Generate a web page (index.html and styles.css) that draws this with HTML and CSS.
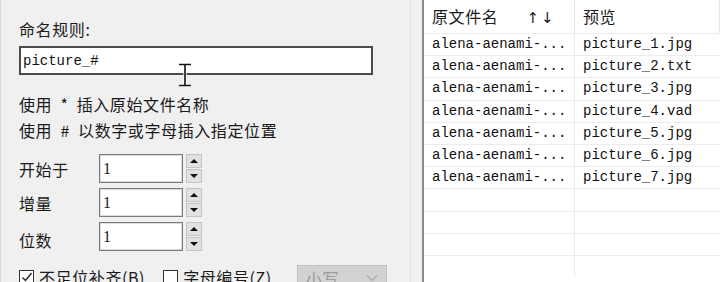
FILE: index.html
```html
<!DOCTYPE html>
<html lang="zh-CN">
<head>
    <meta charset="UTF-8">
    <title>批量重命名</title>
    <link rel="stylesheet" href="styles.css">
</head>
<body>
    <div class="window">
        <div class="settings">
            <div class="title">命名规则:</div>
            <div class="pattern">
                <span class="pattern-text">picture_#</span>
                <svg class="ibeam" width="14" height="24" viewBox="0 0 14 24">
                    <path d="M1 1.5h12M1 22.5h12M7 1.5v21" stroke="#fff" stroke-width="3.2" fill="none"/>
                    <path d="M1 1.5h12M1 22.5h12M7 1.5v21" stroke="#111" stroke-width="1.6" fill="none"/>
                </svg>
            </div>
            <div class="hints">
                <div>使用 <span class="sym">*</span> 插入原始文件名称</div>
                <div>使用 <span class="sym">#</span> 以数字或字母插入指定位置</div>
            </div>

            <div class="spins">
                <div class="spin-row">
                    <span class="spin-label">开始于</span>
                    <span class="spin-box">1</span>
                    <span class="spin-btns">
                        <span class="spin-btn"><i class="up"></i></span>
                        <span class="spin-btn"><i class="down"></i></span>
                    </span>
                </div>
                <div class="spin-row">
                    <span class="spin-label">增量</span>
                    <span class="spin-box">1</span>
                    <span class="spin-btns">
                        <span class="spin-btn"><i class="up"></i></span>
                        <span class="spin-btn"><i class="down"></i></span>
                    </span>
                </div>
                <div class="spin-row low">
                    <span class="spin-label">位数</span>
                    <span class="spin-box">1</span>
                    <span class="spin-btns">
                        <span class="spin-btn"><i class="up"></i></span>
                        <span class="spin-btn"><i class="down"></i></span>
                    </span>
                </div>
            </div>

            <div class="options">
                <label class="check">
                    <span class="box checked">
                        <svg width="12" height="12" viewBox="0 0 12 12"><path d="M1.5 6.5l3 3 6-7.5" stroke="#222" stroke-width="1.4" fill="none"/></svg>
                    </span>
                    不足位补齐(B)
                </label>
                <label class="check">
                    <span class="box"></span>
                    字母编号(Z)
                </label>
                <span class="select">
                    小写
                    <svg width="12" height="8" viewBox="0 0 12 8"><path d="M1 1.5l5 5 5-5" stroke="#aaa" stroke-width="1.2" fill="none"/></svg>
                </span>
            </div>
        </div>

        <div class="list">
            <div class="list-head">
                <div class="col col-name">原文件名<span class="arrows">↑↓</span></div>
                <div class="col col-new">预览</div>
            </div>
            <div class="list-row"><div class="col col-name">alena-aenami-...</div><div class="col col-new">picture_1.jpg</div></div>
            <div class="list-row"><div class="col col-name">alena-aenami-...</div><div class="col col-new">picture_2.txt</div></div>
            <div class="list-row"><div class="col col-name">alena-aenami-...</div><div class="col col-new">picture_3.jpg</div></div>
            <div class="list-row"><div class="col col-name">alena-aenami-...</div><div class="col col-new">picture_4.vad</div></div>
            <div class="list-row"><div class="col col-name">alena-aenami-...</div><div class="col col-new">picture_5.jpg</div></div>
            <div class="list-row"><div class="col col-name">alena-aenami-...</div><div class="col col-new">picture_6.jpg</div></div>
            <div class="list-row"><div class="col col-name">alena-aenami-...</div><div class="col col-new">picture_7.jpg</div></div>
            <div class="list-row"><div class="col col-name"></div><div class="col col-new"></div></div>
            <div class="list-row"><div class="col col-name"></div><div class="col col-new"></div></div>
            <div class="list-row"><div class="col col-name"></div><div class="col col-new"></div></div>
            <div class="list-row"><div class="col col-name"></div><div class="col col-new"></div></div>
        </div>
    </div>
</body>
</html>
```

FILE: styles.css
```css
body {
    margin: 0;
    width: 720px;
    height: 282px;
    overflow: hidden;
    background-color: #f0f0f0;
    font-family: "Noto Sans CJK SC", "Liberation Sans", sans-serif;
    color: #1a1a1a;
}

.window {
    display: flex;
    height: 282px;
}

.settings {
    width: 391px;
    height: 282px;
    padding-left: 18px;
    border-left: 1px solid #d9d9d9;
    border-right: 1px solid #e2e2e2;
    font-size: 16px;
    letter-spacing: 0.6px;
}

.title {
    margin-top: 18px;
    line-height: 22px;
    height: 22px;
    margin-bottom: 6px;
}

.pattern {
    position: relative;
    box-sizing: border-box;
    width: 354px;
    height: 29px;
    background: #fff;
    border: 2px solid #4a4a4a;
    padding-left: 2px;
    display: flex;
    align-items: center;
}

.pattern-text {
    font-family: "Liberation Mono", monospace;
    font-size: 14px;
    letter-spacing: 0;
    color: #111;
}

.ibeam {
    position: absolute;
    left: 157px;
    top: 15px;
}

.hints {
    margin-top: 16px;
    line-height: 26px;
}

.sym {
    margin: 0 4px;
}

.spins {
    margin-top: 11px;
    display: flex;
    flex-direction: column;
    gap: 5px;
}

.spin-row {
    display: flex;
    align-items: center;
    height: 29px;
}

.spin-row.low .spin-label {
    padding-top: 6px;
}

.spin-label {
    width: 80px;
}

.spin-box {
    box-sizing: border-box;
    width: 84px;
    height: 29px;
    background: #fff;
    border: 1px solid #7a7a7a;
    box-shadow: inset 0 0 0 1px #dcdcdc;
    padding-left: 3px;
    font-family: "Liberation Serif", serif;
    font-size: 16px;
    line-height: 27px;
}

.spin-btns {
    margin-left: 3px;
    display: flex;
    flex-direction: column;
    gap: 1px;
}

.spin-btn {
    box-sizing: border-box;
    width: 16px;
    height: 14px;
    background: #e1e1e1;
    border: 1px solid #c4c4c4;
    display: flex;
    align-items: center;
    justify-content: center;
}

.spin-btn i {
    width: 0;
    height: 0;
    border-left: 4px solid transparent;
    border-right: 4px solid transparent;
}

.spin-btn .up {
    border-bottom: 4px solid #111;
}

.spin-btn .down {
    border-top: 4px solid #111;
}

.options {
    margin-top: 14px;
    display: flex;
    align-items: flex-start;
    height: 30px;
}

.check {
    display: flex;
    align-items: center;
    gap: 5px;
    margin-top: 3px;
    line-height: 18px;
}

.check + .check {
    margin-left: 18px;
}

.box {
    box-sizing: border-box;
    width: 15px;
    height: 15px;
    border: 1px solid #333;
    background: #fff;
    display: flex;
    align-items: center;
    justify-content: center;
}

.select {
    margin-left: 25px;
    box-sizing: border-box;
    width: 90px;
    height: 24px;
    background: #d2d2d2;
    border: 1px solid #c2c2c2;
    color: #9a9a9a;
    padding: 2px 8px 0 8px;
    display: flex;
    justify-content: space-between;
    align-items: center;
}

.list {
    margin-left: 11px;
    width: 296px;
    height: 282px;
    background: #fff;
    border-left: 2px solid #8a8a8a;
}

.list-head {
    display: flex;
    height: 33px;
}

.list-head .col {
    line-height: 33px;
    font-size: 16px;
    letter-spacing: 0.6px;
    border-right: 1px solid #e5e5e5;
}

.arrows {
    margin-left: 28px;
    letter-spacing: 2px;
    font-family: "DejaVu Sans", sans-serif;
    font-size: 15px;
}

.list-row {
    display: flex;
    height: 22.2px;
    border-top: 1px solid #ececec;
    box-sizing: border-box;
}

.col {
    box-sizing: border-box;
    padding-left: 8px;
    white-space: nowrap;
    overflow: hidden;
}

.col-name {
    width: 151px;
    border-right: 1px solid #ececec;
}

.col-new {
    flex: 1;
}

.list-row .col {
    font-family: "Liberation Mono", monospace;
    font-size: 14px;
    line-height: 21px;
    color: #111;
}
```
